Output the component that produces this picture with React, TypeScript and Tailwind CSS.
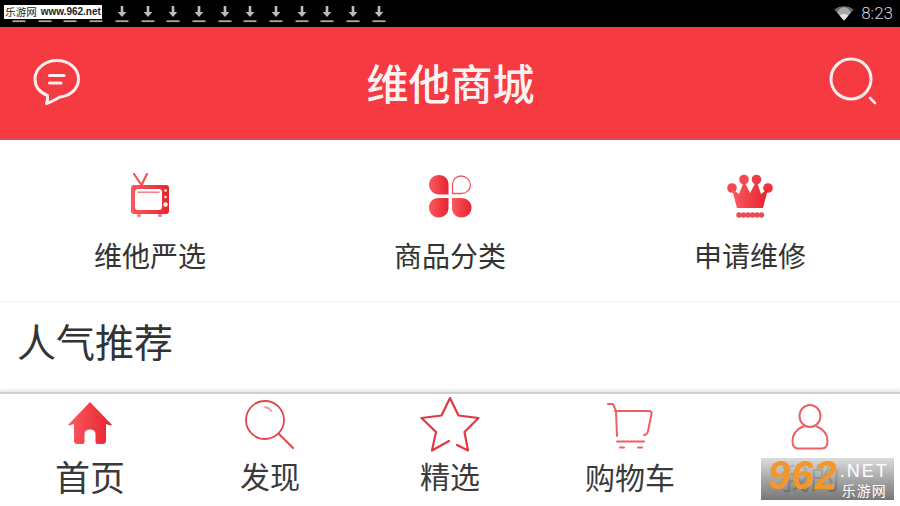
import React from 'react';

const CJK = "font-['Noto_Sans_CJK_SC','Noto_Sans',sans-serif]";

function Download() {
    return (
        <svg width="14" height="18" viewBox="0 0 14 18" className="shrink-0">
            <path d="M5.700 1h2.600v6h3l-4.300 5-4.300-5h3z" fill="#bcbcbc" />
            <rect x="0.500" y="15.300" width="13" height="1.800" fill="#a8a8a8" />
        </svg>
    );
}

function StatusBar() {
    return (
        <div className="relative flex h-[27px] items-center justify-between bg-black pl-[12px] pr-[7px]">
            <div className="flex w-[374px] justify-between">
                {Array.from({ length: 15 }).map((_, i) => (
                    <Download key={i} />
                ))}
            </div>
            <div className="flex items-center gap-[7px]">
                <svg width="20" height="15" viewBox="0 0 20 15">
                    <path d="M10 14.500L0.200 3.600C5.800-1 14.200-1 19.800 3.600z" fill="#6a6a6a" />
                    <path d="M10 14.500L3 6.600C7-.4 13-.4 17 6.600z" fill="#d0d0d0" opacity="0.600" />
                    <path d="M10 14.500L5.600 9.400C8 7.400 12 7.400 14.400 9.400z" fill="#e2e2e2" />
                </svg>
                <span className="font-['Roboto',sans-serif] text-[17px] font-light leading-none text-[#d4d4d4]">8:23</span>
            </div>
            <div className="absolute left-[4px] top-[5px] flex h-[14px] w-[98px] items-center justify-center whitespace-nowrap bg-white text-[10px] font-bold leading-none text-[#222]">
                <span className={`${CJK} text-[10.500px] font-normal`}>乐游网</span>
                <span className="ml-[4px] font-['Liberation_Sans',sans-serif]">www.962.net</span>
            </div>
        </div>
    );
}

function ChatIcon() {
    return (
        <svg width="48" height="48" viewBox="0 0 48 48" fill="none" stroke="#fdeeee" strokeWidth="3" strokeLinecap="round" strokeLinejoin="round">
            <path d="M24 2.500C36 2.500 45.500 10.500 45.500 21C45.500 31 37 38 27 39C23 41 19 44 13.500 45.500C14.500 43 15 40.500 14.500 37.500C7 34.500 2 28.500 2 21C2 10.500 12 2.500 24 2.500Z" />
            <path d="M16.500 17.500H31" />
            <path d="M16.500 25H28" />
        </svg>
    );
}

function SearchIcon() {
    return (
        <svg width="50" height="50" viewBox="0 0 50 50" fill="none" stroke="#fdeeee" strokeLinecap="round">
            <circle cx="23" cy="22" r="20" strokeWidth="3" />
            <path d="M42 41L47 46" strokeWidth="2.600" />
        </svg>
    );
}

function Header() {
    return (
        <div className="grid h-[113px] grid-cols-3 items-center border-b-2 border-[#de4a51] bg-[#f63a42] pb-[2px] pl-[33px] pr-[22px]">
            <div className="flex">
                <ChatIcon />
            </div>
            <div className={`${CJK} ml-[-10px] whitespace-nowrap text-center text-[42px] font-medium leading-none text-[#fdf3f3]`}>维他商城</div>
            <div className="flex justify-end">
                <SearchIcon />
            </div>
        </div>
    );
}

function Gradient({ id }: { id: string }) {
    return (
        <defs>
            <linearGradient id={id} x1="0" y1="0" x2="1" y2="0">
                <stop offset="0" stopColor="#fb5a60" />
                <stop offset="1" stopColor="#e8232e" />
            </linearGradient>
        </defs>
    );
}

function TvIcon() {
    return (
        <svg width="40" height="46" viewBox="0 0 40 46">
            <Gradient id="tv" />
            <path d="M4 1l7.500 11M17 1l-5.500 11" stroke="#f2545a" strokeWidth="2.200" fill="none" strokeLinecap="round" />
            <rect x="1" y="12" width="38" height="29" rx="3" fill="url(#tv)" />
            <rect x="5" y="16" width="27" height="21" rx="3" fill="#fff" />
            <rect x="7.500" y="18.500" width="22" height="1.400" fill="#f2757a" />
            <circle cx="35.500" cy="17.500" r="1.300" fill="#fff" />
            <circle cx="35.500" cy="24" r="1.300" fill="#fff" />
            <circle cx="35.500" cy="31.500" r="2.200" fill="#fff" />
            <rect x="7" y="41" width="4" height="3" rx="1" fill="#f1888c" />
            <rect x="28" y="41" width="4" height="3" rx="1" fill="#f1888c" />
        </svg>
    );
}

function PetalsIcon() {
    return (
        <svg width="44" height="44" viewBox="0 0 44 44">
            <Gradient id="petal" />
            <path d="M11 1C16.500 1 20.500 5 20.500 10.500V20.500H11C5.500 20.500 1 16 1 10.500S5.500 1 11 1Z" fill="url(#petal)" />
            <path d="M33 2C38 2 42.500 6 42.500 11C42.500 16 38 19.500 33 19.500H24.500V11C24.500 6 28 2 33 2Z" fill="#fff" stroke="#f0565c" strokeWidth="1.300" />
            <path d="M10.500 24H20.500V34C20.500 39.500 16 43.500 10.500 43.500S1 39 1 33.500S5 24 10.500 24Z" fill="url(#petal)" />
            <path d="M24 24H33C39 24 43.500 28 43.500 33.500C43.500 39.500 39 43.500 33 43.500C28 43.500 24 39.500 24 34Z" fill="url(#petal)" />
        </svg>
    );
}

function CrownIcon() {
    return (
        <svg width="46" height="44" viewBox="0 0 46 44">
            <Gradient id="crown" />
            <circle cx="5" cy="14" r="4.800" fill="#f7484f" />
            <circle cx="17" cy="5.500" r="4.800" fill="#f7484f" />
            <circle cx="29.500" cy="5.500" r="4.800" fill="#f03c44" />
            <circle cx="41" cy="14" r="4.800" fill="#ee333c" />
            <path d="M5 15L12 20L17 7L23 19L29.500 7L34 20L41 15L36 34H10Z" fill="url(#crown)" />
            {[12, 16.500, 21, 25.500, 30, 34.500].map((x) => (
                <circle key={x} cx={x} cy="41" r="2.700" fill="#ee4a51" />
            ))}
        </svg>
    );
}

const menuItems = [
    { label: '维他严选', icon: <TvIcon /> },
    { label: '商品分类', icon: <PetalsIcon /> },
    { label: '申请维修', icon: <CrownIcon /> },
];

function Menu() {
    return (
        <div className="grid h-[162px] grid-cols-3 border-b border-[#f2f2f2] bg-white">
            {menuItems.map((item) => (
                <div key={item.label} className="flex flex-col items-center">
                    <div className="mt-[31px] flex h-[50px] items-center justify-center">{item.icon}</div>
                    <div className={`${CJK} mt-[14px] text-[28px] leading-[40px] text-[#333]`}>{item.label}</div>
                </div>
            ))}
        </div>
    );
}

function HomeIcon() {
    return (
        <svg width="46" height="44" viewBox="0 0 46 44" className="ml-[-1px]">
            <Gradient id="home" />
            <path d="M23 1L45 24L43.500 24.500L39 23V40C39 42 37.500 43 36 43H30.500C29 43 28.500 42 28.500 40.500V33C28.500 30 26.500 28.500 23 28.500C19.500 28.500 17.500 30 17.500 33V40.500C17.500 42 17 43 15.500 43H10C8.500 43 7 42 7 40V23L2.500 24.500L1 24Z" fill="url(#home)" />
        </svg>
    );
}

function FindIcon() {
    return (
        <svg width="52" height="50" viewBox="0 0 52 50" fill="none" stroke="#e0474c" strokeLinecap="round">
            <circle cx="21" cy="21" r="19" strokeWidth="1.800" />
            <path d="M35 35L49 49" strokeWidth="2" />
            <path d="M21 8C24 8.500 26 10 27.500 12" strokeWidth="1.800" stroke="#ef9a9c" />
        </svg>
    );
}

function StarIcon() {
    return (
        <svg width="60" height="56" viewBox="0 0 60 56" fill="none" stroke="#e03a40" strokeWidth="2.200" strokeLinecap="round" strokeLinejoin="round">
            <path d="M29 44L12 53.500L16 35L1.500 21L21.500 18.500L30 1L38.500 18.500L58.500 21L44.500 35L48 53.500L37 48" />
        </svg>
    );
}

function CartIcon() {
    return (
        <svg width="46" height="46" viewBox="0 0 46 46" fill="none" stroke="#ee5f64" strokeWidth="2" strokeLinecap="round" strokeLinejoin="round">
            <path d="M1 1H6L9 8L10 33" />
            <path d="M8 8H42C44 8 45 9 44.500 11L41 28C40.500 30 40 32 37 32" />
            <path d="M10 38.500H37" />
            <path d="M13 44.500H17M31 44.500H35" />
        </svg>
    );
}

function UserIcon() {
    return (
        <svg width="38" height="46" viewBox="0 0 38 46" fill="none" stroke="#ec5f66" strokeWidth="2" strokeLinejoin="round">
            <ellipse cx="19" cy="12" rx="10.500" ry="11" />
            <path d="M13 22C6 25 1.500 30 1.500 37C1.500 42 3.500 44.500 7 44.500H31C34.500 44.500 36.500 42 36.500 37C36.500 30 32 25 25 22" />
        </svg>
    );
}

const tabs = [
    { label: '首页', icon: <HomeIcon />, size: 'text-[35px]', iconBox: 'mt-[5px] h-[48px]', textBox: 'mt-[7px]' },
    { label: '发现', icon: <FindIcon />, size: 'text-[30px]', iconBox: 'mt-[5px] h-[50px]', textBox: 'mt-[4px]' },
    { label: '精选', icon: <StarIcon />, size: 'text-[30px]', iconBox: 'mt-[4px] h-[54px]', textBox: 'mt-[1px]' },
    { label: '购物车', icon: <CartIcon />, size: 'text-[30px]', iconBox: 'mt-[9px] h-[46px]', textBox: 'mt-[5px]' },
    { label: '我的', icon: <UserIcon />, size: 'text-[30px]', iconBox: 'mt-[10px] h-[46px]', textBox: 'mt-[4px]' },
];

function TabBar() {
    return (
        <div className="relative grid h-[113px] grid-cols-5 border-t-2 border-[#d0d0d0] bg-white shadow-[0_-2px_3px_rgba(0,0,0,0.1)]">
            {tabs.map((tab) => (
                <div key={tab.label} className="flex flex-col items-center">
                    <div className={`flex items-center justify-center ${tab.iconBox}`}>{tab.icon}</div>
                    <div className={`${CJK} ${tab.size} ${tab.textBox} leading-[44px] text-[#3a3a3a]`}>{tab.label}</div>
                </div>
            ))}
            <div className="absolute left-[761px] top-[64px] flex h-[42px] w-[133px] items-start overflow-hidden bg-gradient-to-b from-[#d8d8d8]/90 to-[#5f5f5f]/85 pl-[7px]">
                <span className="font-['Liberation_Sans',sans-serif] text-[40px] font-bold italic leading-[34px] tracking-[1px] text-[#f2982a]">962</span>
                <div className="ml-[2px] flex flex-col items-center pt-[3px]">
                    <span className="font-['Liberation_Sans',sans-serif] text-[18px] font-normal leading-[20px] tracking-[2px] text-white">.NET</span>
                    <span className={`${CJK} text-[14px] leading-[18px] tracking-[1px] text-white`}>乐游网</span>
                </div>
            </div>
        </div>
    );
}

export default function App() {
    return (
        <div className={`flex h-[506px] w-[900px] flex-col overflow-hidden bg-white ${CJK}`}>
            <StatusBar />
            <Header />
            <Menu />
            <div className="h-[90px] bg-white pl-[17px] pt-[13px]">
                <div className="text-[39px] leading-[50px] text-[#333]">人气推荐</div>
            </div>
            <TabBar />
        </div>
    );
}
